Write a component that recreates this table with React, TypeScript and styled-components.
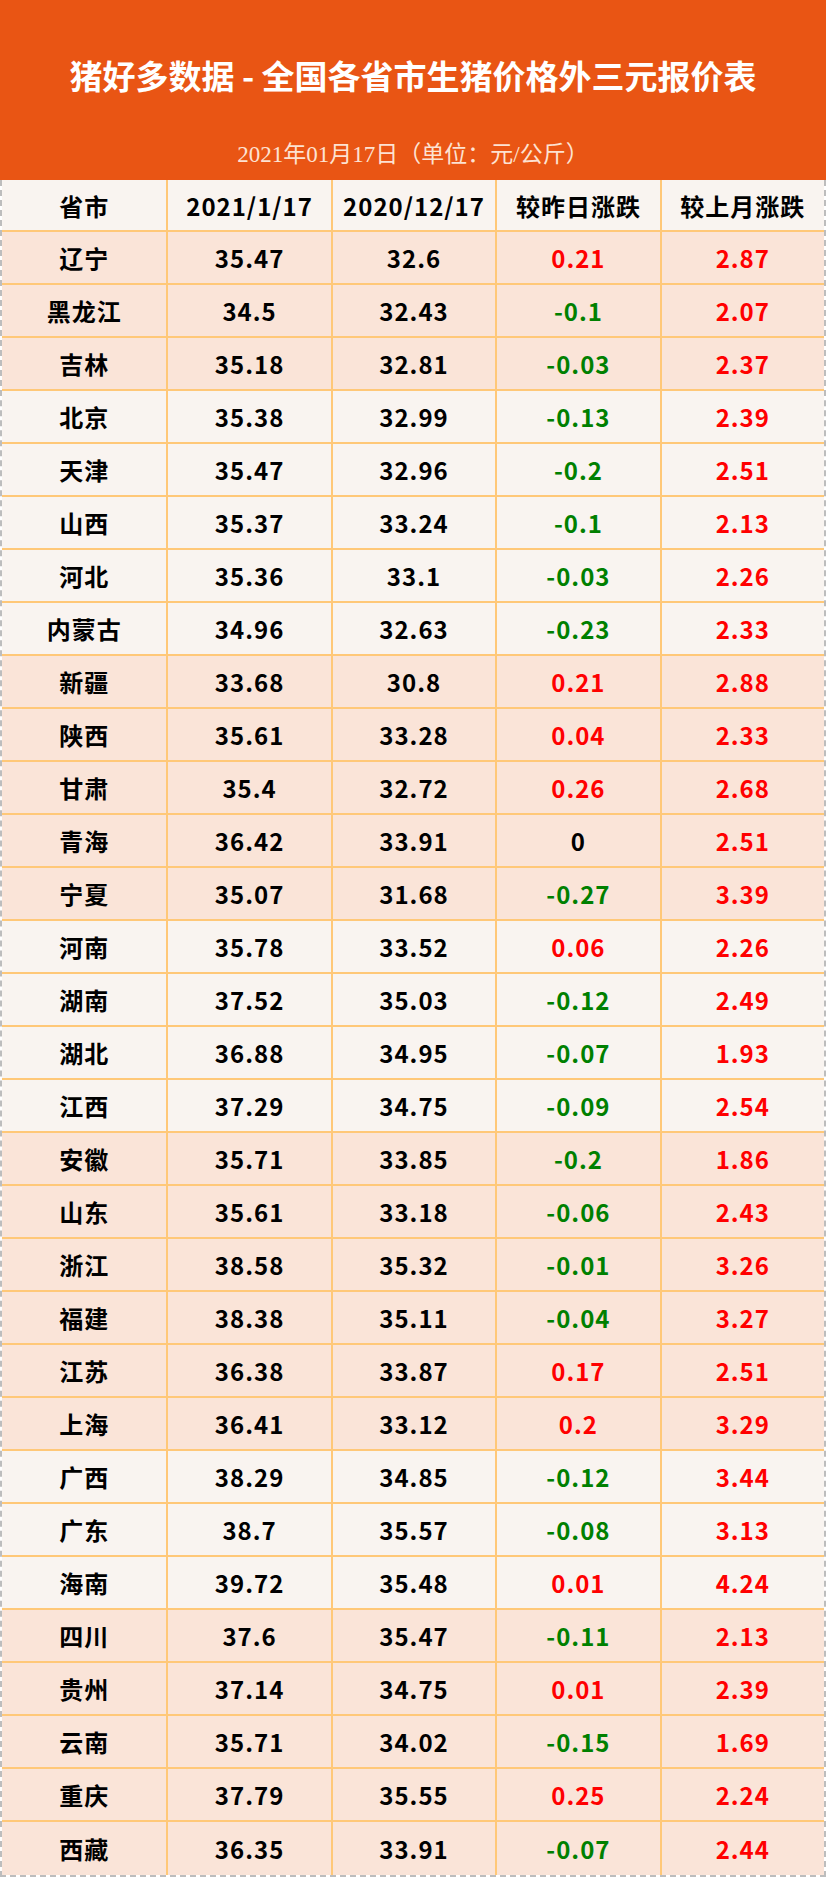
import React from "react";
import styled, { createGlobalStyle } from "styled-components";

const GlobalStyle = createGlobalStyle`
    html, body {
        margin: 0;
        padding: 0;
        background: #ffffff;
    }
    * {
        box-sizing: border-box;
    }
`;

type Row = [string, string, string, string, string];

const rows: Row[] = [
    ["辽宁", "35.47", "32.6", "0.21", "2.87"],
    ["黑龙江", "34.5", "32.43", "-0.1", "2.07"],
    ["吉林", "35.18", "32.81", "-0.03", "2.37"],
    ["北京", "35.38", "32.99", "-0.13", "2.39"],
    ["天津", "35.47", "32.96", "-0.2", "2.51"],
    ["山西", "35.37", "33.24", "-0.1", "2.13"],
    ["河北", "35.36", "33.1", "-0.03", "2.26"],
    ["内蒙古", "34.96", "32.63", "-0.23", "2.33"],
    ["新疆", "33.68", "30.8", "0.21", "2.88"],
    ["陕西", "35.61", "33.28", "0.04", "2.33"],
    ["甘肃", "35.4", "32.72", "0.26", "2.68"],
    ["青海", "36.42", "33.91", "0", "2.51"],
    ["宁夏", "35.07", "31.68", "-0.27", "3.39"],
    ["河南", "35.78", "33.52", "0.06", "2.26"],
    ["湖南", "37.52", "35.03", "-0.12", "2.49"],
    ["湖北", "36.88", "34.95", "-0.07", "1.93"],
    ["江西", "37.29", "34.75", "-0.09", "2.54"],
    ["安徽", "35.71", "33.85", "-0.2", "1.86"],
    ["山东", "35.61", "33.18", "-0.06", "2.43"],
    ["浙江", "38.58", "35.32", "-0.01", "3.26"],
    ["福建", "38.38", "35.11", "-0.04", "3.27"],
    ["江苏", "36.38", "33.87", "0.17", "2.51"],
    ["上海", "36.41", "33.12", "0.2", "3.29"],
    ["广西", "38.29", "34.85", "-0.12", "3.44"],
    ["广东", "38.7", "35.57", "-0.08", "3.13"],
    ["海南", "39.72", "35.48", "0.01", "4.24"],
    ["四川", "37.6", "35.47", "-0.11", "2.13"],
    ["贵州", "37.14", "34.75", "0.01", "2.39"],
    ["云南", "35.71", "34.02", "-0.15", "1.69"],
    ["重庆", "37.79", "35.55", "0.25", "2.24"],
    ["西藏", "36.35", "33.91", "-0.07", "2.44"],
];

// rows drawn on the light background, everything else is peach
const lightRows = [3, 4, 5, 6, 7, 13, 14, 15, 16, 23, 24, 25];

const Page = styled.div`
    width: 826px;
    font-family: "Noto Sans CJK SC", "Noto Sans", sans-serif;
`;

const Banner = styled.div`
    background: #e95514;
    height: 180px;
    padding-top: 54px;
    display: flex;
    flex-direction: column;
    align-items: center;
`;

const Title = styled.h1`
    margin: 0;
    color: #ffffff;
    font-size: 33px;
    line-height: 42px;
    font-weight: 700;
    white-space: nowrap;
`;

const Subtitle = styled.div`
    margin-top: 45px;
    color: #fde2d2;
    font-family: "Liberation Serif", "Noto Sans CJK SC", serif;
    font-size: 23px;
    line-height: 28px;
    white-space: nowrap;
`;

const Table = styled.div`
    border-left: 2px dashed #bdbdbd;
    border-right: 2px dashed #bdbdbd;
    border-bottom: 2px dashed #bdbdbd;
`;

const TableRow = styled.div<{ $bg: string; $height: number; $last?: boolean }>`
    display: grid;
    grid-template-columns: repeat(5, 1fr);
    height: ${p => p.$height}px;
    background: ${p => p.$bg};
    border-bottom: ${p => (p.$last ? "none" : "2px solid #ffc878")};
`;

const Cell = styled.div<{ $color?: string }>`
    display: flex;
    align-items: center;
    justify-content: center;
    color: ${p => p.$color || "#000000"};
    font-size: 24px;
    font-weight: 700;
    letter-spacing: 1px;
    white-space: nowrap;
    & + & {
        border-left: 2px solid #ffc878;
    }
`;

const changeColor = (v: string) => {
    const n = parseFloat(v);
    if (n > 0) return "#ff0000";
    if (n < 0) return "#008000";
    return "#000000";
};

const App = () => {
    return (
        <Page>
            <GlobalStyle />
            <Banner>
                <Title>猪好多数据 - 全国各省市生猪价格外三元报价表</Title>
                <Subtitle>2021年01月17日（单位：元/公斤）</Subtitle>
            </Banner>
            <Table>
                <TableRow $bg="#f9f4f0" $height={52}>
                    <Cell>省市</Cell>
                    <Cell>2021/1/17</Cell>
                    <Cell>2020/12/17</Cell>
                    <Cell>较昨日涨跌</Cell>
                    <Cell>较上月涨跌</Cell>
                </TableRow>
                {rows.map((r, i) => (
                    <TableRow
                        key={r[0]}
                        $bg={lightRows.includes(i) ? "#f9f4f0" : "#fae4d8"}
                        $height={53}
                        $last={i === rows.length - 1}
                    >
                        <Cell>{r[0]}</Cell>
                        <Cell>{r[1]}</Cell>
                        <Cell>{r[2]}</Cell>
                        <Cell $color={changeColor(r[3])}>{r[3]}</Cell>
                        <Cell $color={changeColor(r[4])}>{r[4]}</Cell>
                    </TableRow>
                ))}
            </Table>
        </Page>
    );
};

export default App;
